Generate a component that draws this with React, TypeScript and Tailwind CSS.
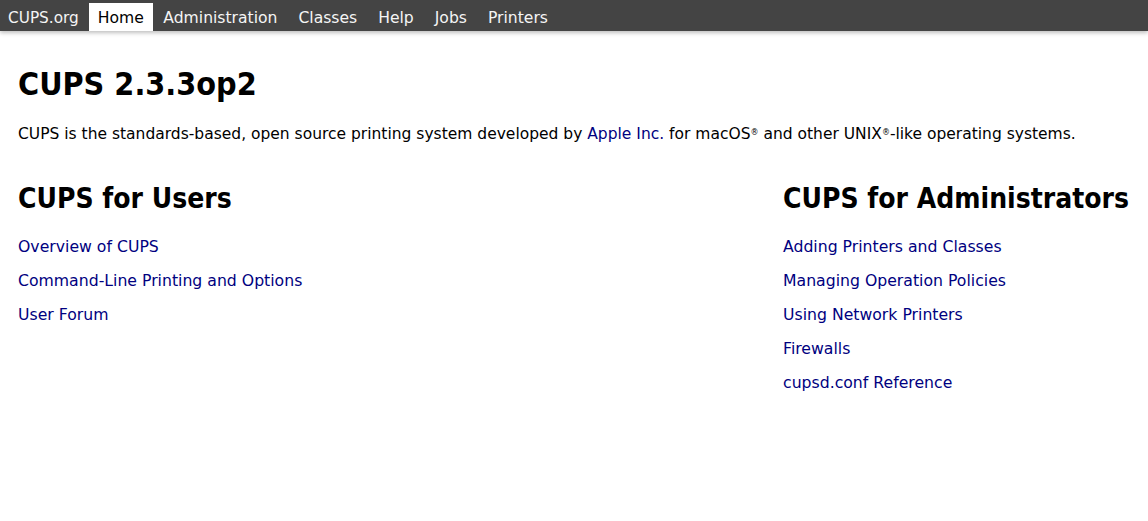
export default function App() {
  const navItems = ["Home", "Administration", "Classes", "Help", "Jobs", "Printers"];
  const userLinks = ["Overview of CUPS", "Command-Line Printing and Options", "User Forum"];
  const adminLinks = [
    "Adding Printers and Classes",
    "Managing Operation Policies",
    "Using Network Printers",
    "Firewalls",
    "cupsd.conf Reference",
  ];
  const heading = { fontFamily: '"DejaVu Sans Condensed", "DejaVu Sans", sans-serif' };

  return (
    <div className="min-h-[521px] bg-white text-black" style={{ fontFamily: '"DejaVu Sans", Verdana, sans-serif' }}>
      {/* Top navigation */}
      <div className="flex h-[31px] items-end bg-[#444444] pl-[2px] shadow-[0_2px_4px_rgba(0,0,0,0.25)]">
        <a className="flex h-[28px] items-center pl-[6px] pr-[10px] pt-[3px] text-[15.3px] text-[#f5f5f5]">CUPS.org</a>
        {navItems.map((item) => (
          <a
            key={item}
            className={
              item === "Home"
                ? "flex h-[28px] items-center bg-white px-[9px] pt-[3px] text-[15.6px] text-black"
                : "flex h-[28px] items-center px-[10.5px] pt-[3px] text-[15.6px] text-[#f5f5f5]"
            }
          >
            {item}
          </a>
        ))}
      </div>

      <div className="px-[18px] pt-[34px]">
        <h1 className="text-[32px] font-bold leading-[38px]" style={heading}>
          CUPS 2.3.3op2
        </h1>
        <p className="mt-[21px] text-[15.5px] leading-[20px]">
          CUPS is the standards-based, open source printing system developed by{" "}
          <a className="text-[#000080]">Apple Inc.</a> for macOS<sup className="text-[8px]">®</sup> and other
          UNIX<sup className="text-[8px]">®</sup>-like operating systems.
        </p>

        <div className="mt-[38px] flex">
          <div className="w-[765px] shrink-0">
            <h2 className="text-[28px] font-bold leading-[34px]" style={heading}>
              CUPS for Users
            </h2>
            <ul className="mt-[21px] flex flex-col gap-[14px]">
              {userLinks.map((l) => (
                <li key={l} className="text-[15.7px] leading-[20px] text-[#000080]">
                  {l}
                </li>
              ))}
            </ul>
          </div>
          <div className="shrink-0">
            <h2 className="text-[28px] font-bold leading-[34px]" style={heading}>
              CUPS for Administrators
            </h2>
            <ul className="mt-[21px] flex flex-col gap-[14px]">
              {adminLinks.map((l) => (
                <li key={l} className="text-[15.7px] leading-[20px] text-[#000080]">
                  {l}
                </li>
              ))}
            </ul>
          </div>
        </div>
      </div>
    </div>
  );
}
